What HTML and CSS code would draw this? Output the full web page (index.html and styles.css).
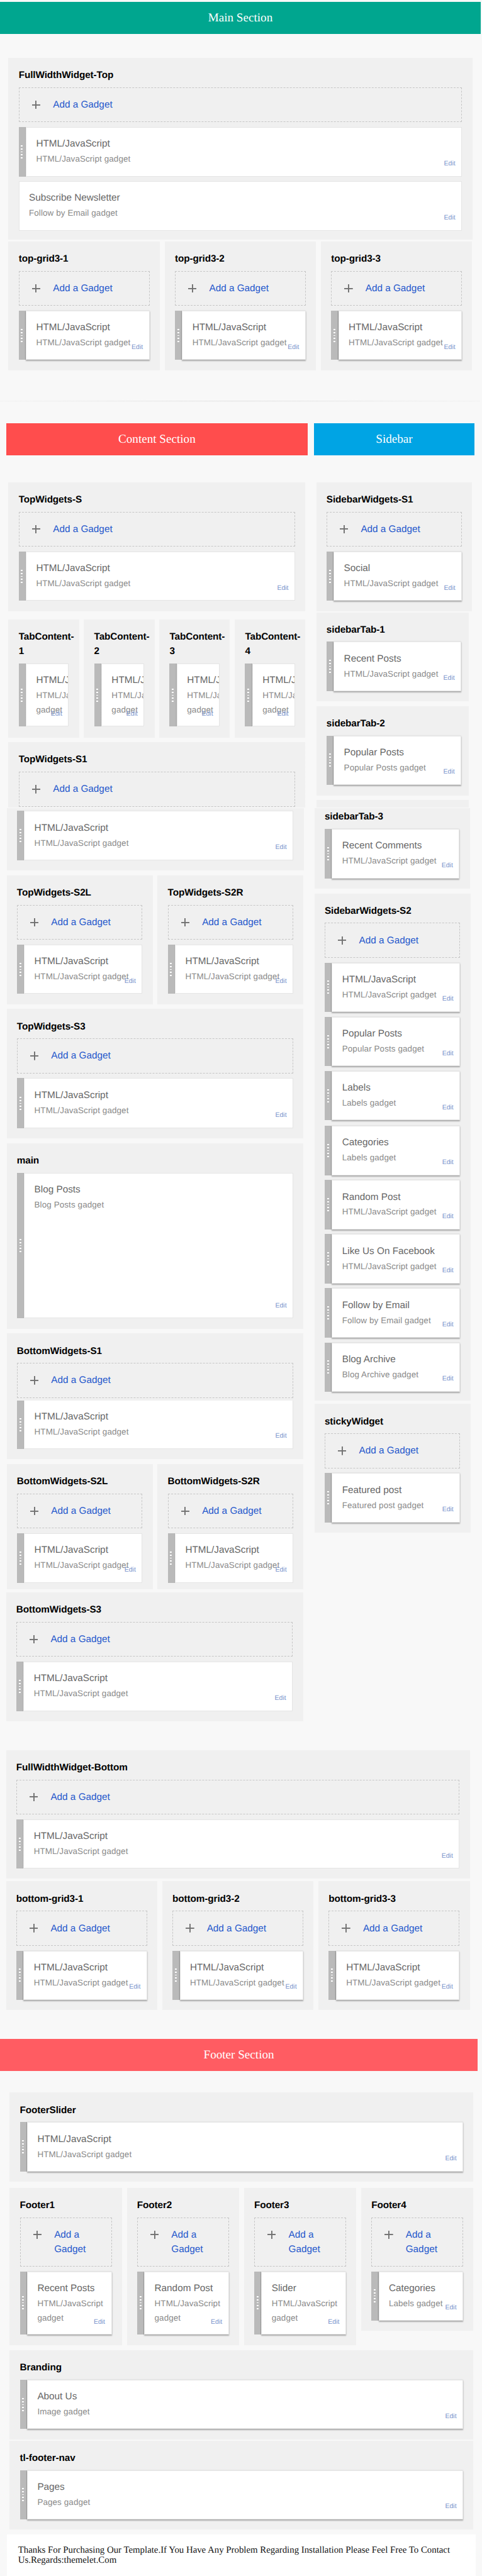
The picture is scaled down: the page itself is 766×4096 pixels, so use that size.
FILE: index.html
```html
<!DOCTYPE html>
<html lang="en">
<head>
<meta charset="utf-8">
<title>Layout</title>
<link rel="stylesheet" href="styles.css">
</head>
<body>
<div class="page">
  <header class="bar bar-main">Main Section</header>

  <div class="top-area">
    <section class="zone zone-full-top">
      <h3>FullWidthWidget-Top</h3>
      <a class="add"><i class="plus"></i><span>Add a Gadget</span></a>
      <div class="card"><i class="grip"></i><div class="body"><b>HTML/JavaScript</b><p>HTML/JavaScript gadget</p><a>Edit</a></div></div>
      <div class="card"><div class="body"><b>Subscribe Newsletter</b><p>Follow by Email gadget</p><a>Edit</a></div></div>
    </section>
    <div class="row thirds raised">
      <section class="zone"><h3>top-grid3-1</h3>
        <a class="add"><i class="plus"></i><span>Add a Gadget</span></a>
        <div class="card"><i class="grip"></i><div class="body"><b>HTML/JavaScript</b><p>HTML/JavaScript gadget</p><a>Edit</a></div></div></section>
      <section class="zone"><h3>top-grid3-2</h3>
        <a class="add"><i class="plus"></i><span>Add a Gadget</span></a>
        <div class="card"><i class="grip"></i><div class="body"><b>HTML/JavaScript</b><p>HTML/JavaScript gadget</p><a>Edit</a></div></div></section>
      <section class="zone"><h3>top-grid3-3</h3>
        <a class="add"><i class="plus"></i><span>Add a Gadget</span></a>
        <div class="card"><i class="grip"></i><div class="body"><b>HTML/JavaScript</b><p>HTML/JavaScript gadget</p><a>Edit</a></div></div></section>
    </div>
  </div>

  <div class="divider"></div>

  <div class="bars">
    <div class="bar bar-content">Content Section</div>
    <div class="bar bar-sidebar">Sidebar</div>
  </div>

  <div class="columns">
    <main class="content">
      <section class="zone inset zone-first"><h3>TopWidgets-S</h3>
        <a class="add"><i class="plus"></i><span>Add a Gadget</span></a>
        <div class="card"><i class="grip"></i><div class="body"><b>HTML/JavaScript</b><p>HTML/JavaScript gadget</p><a>Edit</a></div></div></section>
      <div class="row inset tabs">
        <section class="zone"><h3>TabContent-<br>1</h3>
          <div class="card"><i class="grip"></i><div class="body"><b>HTML/JavaScript</b><p>HTML/JavaScript<br>gadget</p><a>Edit</a></div></div></section>
        <section class="zone"><h3>TabContent-<br>2</h3>
          <div class="card"><i class="grip"></i><div class="body"><b>HTML/JavaScript</b><p>HTML/JavaScript<br>gadget</p><a>Edit</a></div></div></section>
        <section class="zone"><h3>TabContent-<br>3</h3>
          <div class="card"><i class="grip"></i><div class="body"><b>HTML/JavaScript</b><p>HTML/JavaScript<br>gadget</p><a>Edit</a></div></div></section>
        <section class="zone"><h3>TabContent-<br>4</h3>
          <div class="card"><i class="grip"></i><div class="body"><b>HTML/JavaScript</b><p>HTML/JavaScript<br>gadget</p><a>Edit</a></div></div></section>
      </div>
      <section class="zone zone-step-s1"><h3>TopWidgets-S1</h3>
        <a class="add"><i class="plus"></i><span>Add a Gadget</span></a>
        <div class="card"><i class="grip"></i><div class="body"><b>HTML/JavaScript</b><p>HTML/JavaScript gadget</p><a>Edit</a></div></div></section>
      <div class="row halves">
        <section class="zone"><h3>TopWidgets-S2L</h3>
          <a class="add"><i class="plus"></i><span>Add a Gadget</span></a>
          <div class="card"><i class="grip"></i><div class="body"><b>HTML/JavaScript</b><p>HTML/JavaScript gadget</p><a>Edit</a></div></div></section>
        <section class="zone"><h3>TopWidgets-S2R</h3>
          <a class="add"><i class="plus"></i><span>Add a Gadget</span></a>
          <div class="card"><i class="grip"></i><div class="body"><b>HTML/JavaScript</b><p>HTML/JavaScript gadget</p><a>Edit</a></div></div></section>
      </div>
      <section class="zone zone-s3"><h3>TopWidgets-S3</h3>
        <a class="add"><i class="plus"></i><span>Add a Gadget</span></a>
        <div class="card"><i class="grip"></i><div class="body"><b>HTML/JavaScript</b><p>HTML/JavaScript gadget</p><a>Edit</a></div></div></section>
      <section class="zone zone-posts"><h3>main</h3>
        <div class="card"><i class="grip"></i><div class="body"><b>Blog Posts</b><p>Blog Posts gadget</p><a>Edit</a></div></div></section>
      <section class="zone zone-tight"><h3>BottomWidgets-S1</h3>
        <a class="add"><i class="plus"></i><span>Add a Gadget</span></a>
        <div class="card"><i class="grip"></i><div class="body"><b>HTML/JavaScript</b><p>HTML/JavaScript gadget</p><a>Edit</a></div></div></section>
      <div class="row halves halves-short">
        <section class="zone"><h3>BottomWidgets-S2L</h3>
          <a class="add"><i class="plus"></i><span>Add a Gadget</span></a>
          <div class="card"><i class="grip"></i><div class="body"><b>HTML/JavaScript</b><p>HTML/JavaScript gadget</p><a>Edit</a></div></div></section>
        <section class="zone"><h3>BottomWidgets-S2R</h3>
          <a class="add"><i class="plus"></i><span>Add a Gadget</span></a>
          <div class="card"><i class="grip"></i><div class="body"><b>HTML/JavaScript</b><p>HTML/JavaScript gadget</p><a>Edit</a></div></div></section>
      </div>
      <section class="zone zone-last"><h3>BottomWidgets-S3</h3>
        <a class="add"><i class="plus"></i><span>Add a Gadget</span></a>
        <div class="card"><i class="grip"></i><div class="body"><b>HTML/JavaScript</b><p>HTML/JavaScript gadget</p><a>Edit</a></div></div></section>
    </main>

    <aside class="sidebar raised">
      <section class="zone side-first"><h3>SidebarWidgets-S1</h3>
        <a class="add"><i class="plus"></i><span>Add a Gadget</span></a>
        <div class="card"><i class="grip"></i><div class="body"><b>Social</b><p>HTML/JavaScript gadget</p><a>Edit</a></div></div></section>
      <section class="zone side-tab"><h3>sidebarTab-1</h3>
        <div class="card"><i class="grip"></i><div class="body"><b>Recent Posts</b><p>HTML/JavaScript gadget</p><a>Edit</a></div></div></section>
      <section class="zone side-tab"><h3>sidebarTab-2</h3>
        <div class="card"><i class="grip"></i><div class="body"><b>Popular Posts</b><p>Popular Posts gadget</p><a>Edit</a></div></div></section>
      <section class="zone side-step"><h3>sidebarTab-3</h3>
        <div class="card"><i class="grip"></i><div class="body"><b>Recent Comments</b><p>HTML/JavaScript gadget</p><a>Edit</a></div></div></section>
      <section class="zone side-list"><h3>SidebarWidgets-S2</h3>
        <a class="add"><i class="plus"></i><span>Add a Gadget</span></a>
        <div class="card"><i class="grip"></i><div class="body"><b>HTML/JavaScript</b><p>HTML/JavaScript gadget</p><a>Edit</a></div></div>
        <div class="card"><i class="grip"></i><div class="body"><b>Popular Posts</b><p>Popular Posts gadget</p><a>Edit</a></div></div>
        <div class="card"><i class="grip"></i><div class="body"><b>Labels</b><p>Labels gadget</p><a>Edit</a></div></div>
        <div class="card card-gap"><i class="grip"></i><div class="body"><b>Categories</b><p>Labels gadget</p><a>Edit</a></div></div>
        <div class="card"><i class="grip"></i><div class="body"><b>Random Post</b><p>HTML/JavaScript gadget</p><a>Edit</a></div></div>
        <div class="card"><i class="grip"></i><div class="body"><b>Like Us On Facebook</b><p>HTML/JavaScript gadget</p><a>Edit</a></div></div>
        <div class="card"><i class="grip"></i><div class="body"><b>Follow by Email</b><p>Follow by Email gadget</p><a>Edit</a></div></div>
        <div class="card"><i class="grip"></i><div class="body"><b>Blog Archive</b><p>Blog Archive gadget</p><a>Edit</a></div></div></section>
      <section class="zone side-sticky"><h3>stickyWidget</h3>
        <a class="add"><i class="plus"></i><span>Add a Gadget</span></a>
        <div class="card"><i class="grip"></i><div class="body"><b>Featured post</b><p>Featured post gadget</p><a>Edit</a></div></div></section>
    </aside>
  </div>

  <div class="bottom-area">
    <section class="zone zone-full-bottom"><h3>FullWidthWidget-Bottom</h3>
      <a class="add"><i class="plus"></i><span>Add a Gadget</span></a>
      <div class="card"><i class="grip"></i><div class="body"><b>HTML/JavaScript</b><p>HTML/JavaScript gadget</p><a>Edit</a></div></div></section>
    <div class="row thirds raised">
      <section class="zone"><h3>bottom-grid3-1</h3>
        <a class="add"><i class="plus"></i><span>Add a Gadget</span></a>
        <div class="card"><i class="grip"></i><div class="body"><b>HTML/JavaScript</b><p>HTML/JavaScript gadget</p><a>Edit</a></div></div></section>
      <section class="zone"><h3>bottom-grid3-2</h3>
        <a class="add"><i class="plus"></i><span>Add a Gadget</span></a>
        <div class="card"><i class="grip"></i><div class="body"><b>HTML/JavaScript</b><p>HTML/JavaScript gadget</p><a>Edit</a></div></div></section>
      <section class="zone"><h3>bottom-grid3-3</h3>
        <a class="add"><i class="plus"></i><span>Add a Gadget</span></a>
        <div class="card"><i class="grip"></i><div class="body"><b>HTML/JavaScript</b><p>HTML/JavaScript gadget</p><a>Edit</a></div></div></section>
    </div>
  </div>

  <div class="bar bar-footer">Footer Section</div>

  <footer class="footer-area raised">
    <section class="zone"><h3>FooterSlider</h3>
      <div class="card"><i class="grip"></i><div class="body"><b>HTML/JavaScript</b><p>HTML/JavaScript gadget</p><a>Edit</a></div></div></section>
    <div class="row quarters">
      <section class="zone"><h3>Footer1</h3>
        <a class="add"><i class="plus"></i><span>Add a<br>Gadget</span></a>
        <div class="card"><i class="grip"></i><div class="body"><b>Recent Posts</b><p>HTML/JavaScript<br>gadget</p><a>Edit</a></div></div></section>
      <section class="zone"><h3>Footer2</h3>
        <a class="add"><i class="plus"></i><span>Add a<br>Gadget</span></a>
        <div class="card"><i class="grip"></i><div class="body"><b>Random Post</b><p>HTML/JavaScript<br>gadget</p><a>Edit</a></div></div></section>
      <section class="zone"><h3>Footer3</h3>
        <a class="add"><i class="plus"></i><span>Add a<br>Gadget</span></a>
        <div class="card"><i class="grip"></i><div class="body"><b>Slider</b><p>HTML/JavaScript<br>gadget</p><a>Edit</a></div></div></section>
      <section class="zone"><h3>Footer4</h3>
        <a class="add"><i class="plus"></i><span>Add a<br>Gadget</span></a>
        <div class="card"><i class="grip"></i><div class="body"><b>Categories</b><p>Labels gadget</p><a>Edit</a></div></div></section>
    </div>
    <section class="zone zone-branding"><h3>Branding</h3>
      <div class="card"><i class="grip"></i><div class="body"><b>About Us</b><p>Image gadget</p><a>Edit</a></div></div></section>
    <section class="zone zone-nav"><h3>tl-footer-nav</h3>
      <div class="card"><i class="grip"></i><div class="body"><b>Pages</b><p>Pages gadget</p><a>Edit</a></div></div></section>
  </footer>

  <div class="thanks">Thanks For Purchasing Our Template.If You Have Any Problem Regarding Installation Please Feel Free To Contact<br>Us.Regards:themelet.Com</div>
</div>
</body>
</html>
```
FILE: styles.css
```css
* { box-sizing: border-box; }
html, body { margin: 0; background: #f8f8f8; }
body { overflow: hidden; height: 4096px; }
.page {
  zoom: 0.9573;
  width: 800px;
  padding-top: 3px;
  background: #f8f8f8;
  font: 16px/24px "Liberation Sans", Arial, sans-serif;
  text-rendering: geometricPrecision;
}

/* section banners */
.bar {
  height: 53px;
  color: #fff;
  font: 20px/55px "Liberation Serif", "Times New Roman", serif;
  text-align: center;
}
.bar-main { width: 798px; background: #00a68f; }
.bars { display: flex; gap: 10px; margin: 35px 0 0 10px; }
.bar-content { width: 501px; background: #ff4d4d; }
.bar-sidebar { width: 267px; background: #00a4e4; }
.bar-footer { width: 793px; margin-top: 48px; background: #ff5c62; }
.divider {
  width: 797px;
  height: 3px;
  margin-top: 50px;
  background: linear-gradient(90deg, rgba(248,248,248,.7), rgba(248,248,248,0) 50%, rgba(248,248,248,.7)), linear-gradient(#e2e2e2, #f6f6f6);
}

/* gadget zones */
.zone { padding: 17px 17px 17px; background: #f0f0f0; }
.zone h3 { margin: 0 0 8px; padding-top: 1px; height: 24px; font-size: 16px; line-height: 24px; letter-spacing: -.1px; color: #000; white-space: nowrap; }
.add {
  display: flex;
  min-height: 58px;
  padding: 16px 0 16px 21px;
  border: 1px dashed #c6c6c6;
  color: #2558cc;
}
.add span { margin: 1px 0 -1px; }
.plus {
  width: 14px;
  height: 14px;
  margin: 5px 21px 0 0;
  background:
    linear-gradient(#717171, #717171) center / 100% 2px no-repeat,
    linear-gradient(#717171, #717171) center / 2px 100% no-repeat;
}
.card { display: flex; min-height: 82px; }
.add + .card, .card + .card { margin-top: 8px; }
.grip {
  flex: none;
  width: 12px;
  background:
    repeating-linear-gradient(#fff 0 2px, transparent 2px 5px) 4px 50% / 3px 22px no-repeat,
    linear-gradient(90deg, #bababa 10px, #a9a9a9);
}
.body {
  position: relative;
  flex: 1;
  min-width: 0;
  padding: 16px 0 14px 16px;
  border: 1px solid #e5e5e5;
  background: #fff;
  overflow: hidden;
}
.body b { display: block; font-weight: 400; color: #666; white-space: nowrap; }
.body p { margin: 1px 0 0; font-size: 14px; letter-spacing: .12px; color: #898989; white-space: nowrap; }
.body a { position: absolute; right: 10px; bottom: 12px; font-size: 11px; line-height: 16px; color: #7893cc; }
.raised .body { box-shadow: 0 2px 2px rgba(0,0,0,.27), 0 0 2px rgba(0,0,0,.12); }

/* rows of zones */
.row { display: flex; gap: 8px; }
.row > .zone { flex: 1; min-width: 0; }
.top-area { margin: 40px 0 0 14px; width: 770px; }
.zone-full-top { padding-bottom: 15px; height: 302px; }
.thirds { margin-top: 3px; height: 214px; }

.columns { display: flex; gap: 15px; margin: 45px 0 0 10px; height: 2058px; }
.content { display: flex; flex-direction: column; gap: 8px; width: 497px; }
.content > * { flex: none; margin-left: 1px; width: 493px; }
.content > .inset { margin-left: 4px; }
.zone-first { height: 214px; }
.tabs { margin-top: 6px; height: 196px; }
.tabs h3 { height: 48px; }
.zone-step-s1.zone {
  width: 496px;
  height: 213px;
  padding-left: 20px;
  background:
    linear-gradient(#f0f0f0, #f0f0f0) 3px 0 / 493px 109px no-repeat,
    linear-gradient(#f0f0f0, #f0f0f0) 0 109px / 493px 104px no-repeat;
}
.zone-step-s1 .card { margin: 7px 3px 0 -3px; }
.halves { height: 214px; }
.zone-s3 { height: 215px; }
.zone-s3 .card { height: 83px; }
.zone-posts { height: 308px; }
.zone-posts .card { height: 242px; }
.zone-tight { height: 209px; }
.zone-tight .card { margin-top: 4px; min-height: 81px; }
.zone-tight .body { border-top: 0; }
.halves-short { height: 208px; }
.content > .zone-last { height: 214px; margin: -3px 0 0; }

.sidebar { display: flex; flex-direction: column; gap: 8px; width: 260px; }
.sidebar > * { flex: none; }
.side-first { width: 259px; height: 214px; margin-left: 3px; }
.side-tab { width: 253px; height: 148px; margin-left: 3px; padding-right: 12px; }
.side-first + .side-tab { margin-top: -6px; }
.side-step.zone {
  width: 258px;
  height: 147px;
  padding-top: 16px;
  background:
    linear-gradient(#f0f0f0, #f0f0f0) 3px 0 / 253px 13px no-repeat,
    linear-gradient(#f0f0f0, #f0f0f0) 0 13px / 258px 134px no-repeat;
}
.side-list { width: 259px; height: 842px; }
.side-list .card-gap { margin-top: 9px; }
.side-sticky { width: 259px; height: 214px; margin-top: -2px; }

.bottom-area { margin: 48px 0 0 10px; width: 770px; }
.zone-full-bottom { height: 213px; }
.bottom-area .thirds { margin-top: 5px; }

.footer-area { margin: 36px 0 0 16px; width: 770px; }
.quarters { align-items: flex-start; margin: 10px 0 8px; height: 262px; }
.zone-nav { margin-top: 2px; }

.thanks {
  width: 778px;
  height: 72px;
  margin: 8px 0 0 12px;
  padding: 18px 0 0 18px;
  background: #fff;
  color: #111;
  font: 15.5px/17px "Liberation Serif", "Times New Roman", serif;
  white-space: nowrap;
}
```
